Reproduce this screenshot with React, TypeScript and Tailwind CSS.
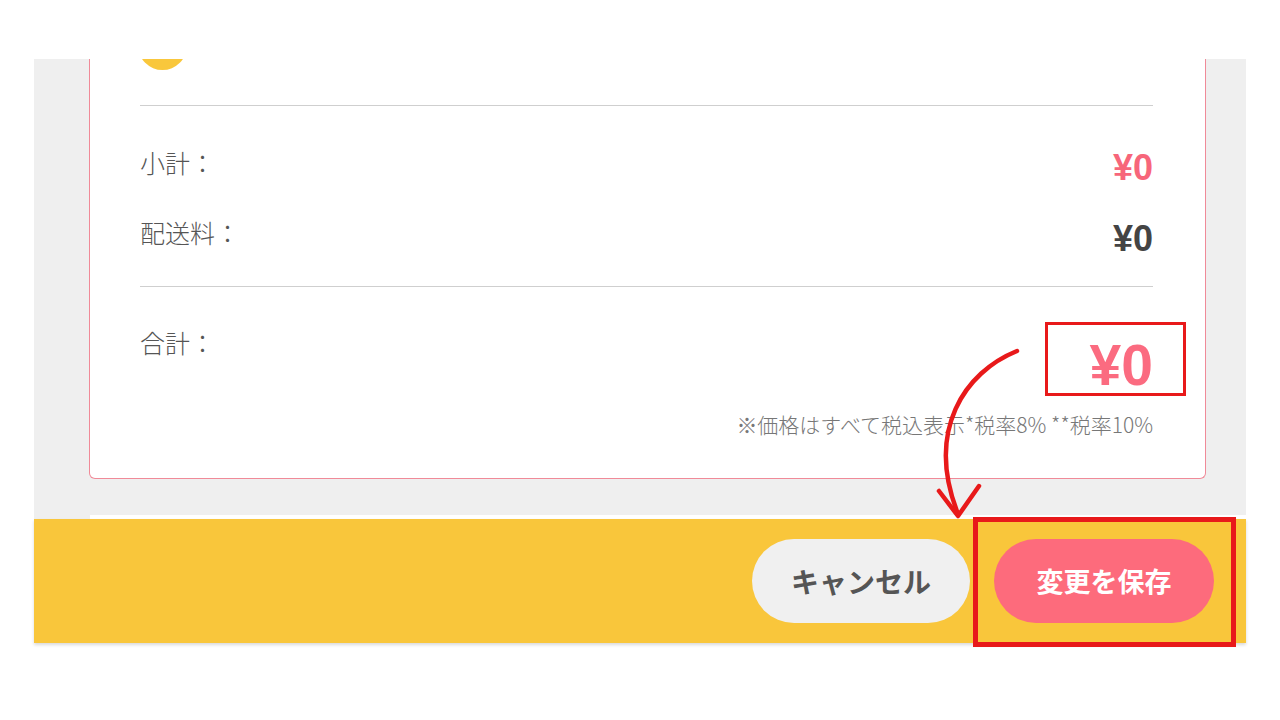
import React from 'react';

const jp = { fontFamily: '"Noto Sans CJK JP", sans-serif' };
const num = { fontFamily: '"Liberation Sans", "Noto Sans CJK JP", sans-serif' };

export default function App() {
  return (
    <div className="relative w-[1280px] h-[720px] bg-white overflow-hidden" style={jp}>
      <div className="pt-[59px] px-[34px]">
        {/* Gray panel with summary card */}
        <div className="bg-[#efefef] pl-[55px] pr-[40px] pb-[36px]">
          <div className="bg-white border border-t-0 border-[#f08a98] rounded-b-[6px] overflow-hidden pl-[50px] pr-[52px] pb-[41px]">
            <div className="h-[46px] flex items-start">
              <div className="w-[49px] h-[49px] rounded-full bg-[#f9c73c] mt-[-38px] ml-[-2px]" />
            </div>
            <div className="h-px bg-[#cfcfcf]" />

            <div className="flex justify-between items-start mt-[38px]">
              <span className="text-[25px] leading-[36px] text-[#555] font-light">小計：</span>
              <span className="text-[36px] leading-[40px] font-bold text-[#f7667a] mt-[4px]" style={num}>¥0</span>
            </div>
            <div className="flex justify-between items-start mt-[26px]">
              <span className="text-[25px] leading-[36px] text-[#555] font-light">配送料：</span>
              <span className="text-[36px] leading-[40px] font-bold text-[#444] mt-[5px]" style={num}>¥0</span>
            </div>

            <div className="h-px bg-[#cfcfcf] mt-[27px]" />

            <div className="flex justify-between items-start mt-[37px]">
              <span className="text-[25px] leading-[36px] text-[#555] font-light">合計：</span>
              <span className="text-[57px] leading-[60px] font-bold text-[#fb6b80] mt-[11px]" style={num}>¥0</span>
            </div>
            <p className="text-right text-[21px] leading-[26px] text-[#777] font-light mt-[16px]">
              ※価格はすべて税込表示*税率8% **税率10%
            </p>
          </div>
        </div>

        <div className="h-[4px] bg-[#efefef]">
          <div className="ml-[56px] h-full bg-white" />
        </div>

        {/* Footer bar */}
        <div className="bg-[#f9c63b] h-[124px] flex items-center justify-end gap-[24px] pr-[32px] shadow-[0_2px_3px_rgba(0,0,0,0.15)]">
          <button className="w-[218px] h-[84px] rounded-full bg-[#f0f0f0] text-[28px] font-bold text-[#555]">
            キャンセル
          </button>
          <button className="w-[220px] h-[84px] rounded-full bg-[#fd6b7c] text-[27px] font-bold text-white">
            変更を保存
          </button>
        </div>
      </div>

      {/* Annotations */}
      <div className="absolute left-[1045px] top-[322px] w-[141px] h-[74px] border-[3px] border-[#e8191a]" />
      <div className="absolute left-[973px] top-[517px] w-[263px] h-[130px] border-[5px] border-[#e8191a]" />
      <svg className="absolute left-0 top-0" width="1280" height="720" viewBox="0 0 1280 720" fill="none">
        <path d="M1017 351 C965 372 925 430 958 514" stroke="#e8191a" strokeWidth="4.5" strokeLinecap="round" />
        <path d="M939 491 L958 516 L979 486" stroke="#e8191a" strokeWidth="4.5" strokeLinecap="round" strokeLinejoin="round" />
      </svg>
    </div>
  );
}
